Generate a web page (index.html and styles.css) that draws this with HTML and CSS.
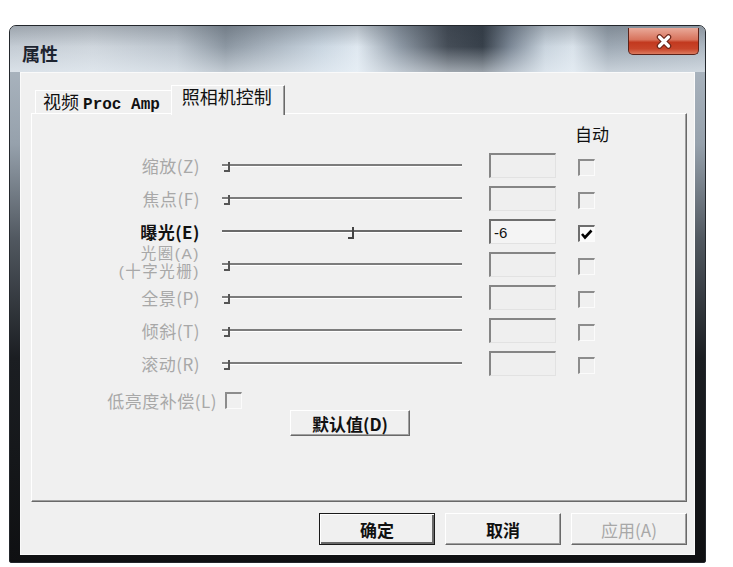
FILE: index.html
```html
<!DOCTYPE html>
<html lang="zh-CN">
<head>
    <meta charset="UTF-8">
    <title>属性</title>
    <link rel="stylesheet" href="styles.css">
</head>
<body>
    <div class="window">
        <div class="titlebar">
            <span class="title">属性</span>
            <div class="close">
                <svg width="18" height="15" viewBox="0 0 18 15">
                    <path d="M4.5 3 L13.5 12 M13.5 3 L4.5 12" stroke="#6b2418" stroke-width="5.5" stroke-linecap="round"/>
                    <path d="M4.5 3 L13.5 12 M13.5 3 L4.5 12" stroke="#ffffff" stroke-width="3.2" stroke-linecap="round"/>
                </svg>
            </div>
        </div>

        <div class="client">
            <div class="tabs">
                <div class="tab">视频 <span class="mono">Proc Amp</span></div>
                <div class="tab active">照相机控制</div>
            </div>

            <div class="panel">
                <div class="grid">
                    <div></div><div></div><div></div>
                    <div class="auto-head">自动</div>

                    <div class="label">缩放(Z)</div>
                    <div class="slider"><span class="track"></span><span class="thumb"></span></div>
                    <div class="field"></div>
                    <div class="check"></div>

                    <div class="label">焦点(F)</div>
                    <div class="slider"><span class="track"></span><span class="thumb"></span></div>
                    <div class="field"></div>
                    <div class="check"></div>

                    <div class="label on">曝光(E)</div>
                    <div class="slider on"><span class="track"></span><span class="thumb" style="left: 126px"></span></div>
                    <div class="field on">-6</div>
                    <div class="check on">
                        <svg width="14" height="14" viewBox="0 0 14 14">
                            <path d="M2 7 L5 10.5 L11.5 3.5" fill="none" stroke="#000" stroke-width="2.6"/>
                        </svg>
                    </div>

                    <div class="label two">
                        <span>光圈(A)</span>
                        <span>(十字光栅)</span>
                    </div>
                    <div class="slider"><span class="track"></span><span class="thumb"></span></div>
                    <div class="field"></div>
                    <div class="check"></div>

                    <div class="label">全景(P)</div>
                    <div class="slider"><span class="track"></span><span class="thumb"></span></div>
                    <div class="field"></div>
                    <div class="check"></div>

                    <div class="label">倾斜(T)</div>
                    <div class="slider"><span class="track"></span><span class="thumb"></span></div>
                    <div class="field"></div>
                    <div class="check"></div>

                    <div class="label">滚动(R)</div>
                    <div class="slider"><span class="track"></span><span class="thumb"></span></div>
                    <div class="field"></div>
                    <div class="check"></div>
                </div>

                <div class="lowlight">
                    <span class="label">低亮度补偿(L)</span>
                    <div class="check"></div>
                </div>

                <div class="default-row">
                    <button class="btn">默认值(D)</button>
                </div>
            </div>

            <div class="actions">
                <button class="btn primary">确定</button>
                <button class="btn">取消</button>
                <button class="btn off">应用(A)</button>
            </div>
        </div>
    </div>
</body>
</html>
```

FILE: styles.css
```css
* {
    box-sizing: border-box;
}
body {
    margin: 0;
    background: #fff;
    font-family: "Noto Sans CJK SC", "Liberation Sans", sans-serif;
}
.window {
    width: 697px;
    height: 538px;
    margin: 25px 0 0 9px;
    display: flex;
    flex-direction: column;
    padding: 0 10px 7px 10px;
    border: 1px solid #23272c;
    border-radius: 7px 7px 2px 2px;
    background: linear-gradient(to bottom, #b3bdc7 0%, #96a1ac 22%, #50575f 40%, #1b1e22 62%, #0f1012 100%);
}
.titlebar {
    height: 46px;
    margin: 0 -10px;
    padding: 0 6px 0 12px;
    display: flex;
    justify-content: space-between;
    align-items: flex-start;
    border-radius: 6px 6px 0 0;
    background:
        linear-gradient(to bottom, rgba(40,48,58,0.25) 0%, rgba(255,255,255,0) 45%, rgba(235,242,248,0.55) 100%),
        linear-gradient(to right, #c4ccd4 0%, #cfd6dd 12%, #bcc5ce 24%, #8c97a2 31%, #a8b3be 37%, #cad6e1 45%, #dfe8f0 50%, #8f9aa6 56%, #454d57 63%, #37404a 68%, #7c8896 72%, #c8d3dd 77%, #d9e2ea 81%, #9ea9b4 86%, #aeb8c2 100%);
}
.title {
    margin-top: 14px;
    font-size: 18px;
    font-weight: 700;
    color: #1d2430;
}
.close {
    width: 71px;
    height: 27px;
    margin-top: 2px;
    display: flex;
    align-items: center;
    justify-content: center;
    border: 1px solid #5b2219;
    border-top: none;
    border-radius: 0 0 5px 5px;
    background: linear-gradient(to bottom, #e9a999 0%, #d8735c 45%, #c2391f 55%, #c8452a 80%, #dc7a5e 100%);
}
.client {
    flex: 1;
    display: flex;
    flex-direction: column;
    padding: 12px 7px 0 10px;
    background: #f0f0f0;
    border: 1px solid #fafafa;
}
.tabs {
    height: 28px;
    padding-left: 4px;
    display: flex;
    align-items: flex-end;
}
.tab {
    height: 23px;
    padding: 0 11px 0 7px;
    font-size: 18px;
    line-height: 20px;
    color: #111;
    white-space: nowrap;
    border-top: 1px solid #fff;
    border-left: 1px solid #fff;
}
.tab .mono {
    font-family: "Liberation Mono", monospace;
    font-size: 16px;
    font-weight: 700;
}
.tab.active {
    height: 30px;
    margin-bottom: -2px;
    position: relative;
    z-index: 1;
    padding: 0 12px 0 10px;
    line-height: 21px;
    background: #f0f0f0;
    border-right: 1px solid #696969;
    box-shadow: inset -1px 0 0 #a0a0a0;
}
.panel {
    height: 389px;
    padding: 10px 0 0 1px;
    border-top: 1px solid #fff;
    border-left: 1px solid #fff;
    border-right: 1px solid #696969;
    border-bottom: 1px solid #696969;
    box-shadow: inset -1px -1px 0 #a0a0a0;
}
.grid {
    display: grid;
    grid-template-columns: 167px 240px 72px 17px;
    grid-template-rows: 21px repeat(7, 25px);
    column-gap: 22px;
    row-gap: 8px;
    align-items: center;
}
.auto-head {
    margin-left: -3px;
    align-self: start;
    white-space: nowrap;
    font-size: 17px;
    line-height: 20px;
    color: #111;
}
.label {
    text-align: right;
    font-size: 17px;
    line-height: 25px;
    letter-spacing: 0.5px;
    color: #a8a8a8;
    white-space: nowrap;
}
.label.on {
    color: #111;
    font-weight: 700;
}
.label.two {
    display: flex;
    flex-direction: column;
    align-items: flex-end;
    margin-top: -3px;
    font-family: "Liberation Sans", "Noto Sans CJK SC", sans-serif;
    font-size: 15.5px;
    line-height: 18px;
    letter-spacing: 1.5px;
}
.slider {
    position: relative;
    height: 25px;
    display: flex;
    align-items: center;
}
.track {
    width: 100%;
    height: 3px;
    border-top: 2px solid #7c7c7c;
    border-bottom: 1px solid #fff;
}
.slider.on .track {
    border-top-color: #6a6a6a;
}
.thumb {
    position: absolute;
    left: 2px;
    top: 9px;
    width: 6px;
    height: 10px;
    border-right: 2px solid #555;
    border-bottom: 2px solid #555;
}
.slider.on .thumb {
    top: 8px;
    height: 12px;
    border-color: #444;
}
.field {
    width: 67px;
    height: 25px;
    margin-left: 5px;
    padding-left: 3px;
    font-family: "Liberation Sans", sans-serif;
    font-size: 15px;
    line-height: 23px;
    color: #111;
    background: #efefef;
    border-top: 2px solid #858585;
    border-left: 2px solid #858585;
    border-right: 1px solid #e2e2e2;
    border-bottom: 1px solid #e2e2e2;
}
.field.on {
    background: #f4f4f4;
    border-color: #6e6e6e #e2e2e2 #e2e2e2 #6e6e6e;
}
.check {
    width: 17px;
    height: 17px;
    margin-top: 3px;
    background: #f0f0f0;
    border-top: 2px solid #8c8c8c;
    border-left: 2px solid #8c8c8c;
    border-right: 1px solid #fbfbfb;
    border-bottom: 1px solid #fbfbfb;
}
.check.on {
    background: #fafafa;
    border-top-color: #6e6e6e;
    border-left-color: #6e6e6e;
}
.check svg {
    display: block;
}
.lowlight {
    width: 209px;
    height: 17px;
    margin-top: 16px;
    display: flex;
    justify-content: flex-end;
    align-items: center;
    gap: 8px;
}
.lowlight .check {
    margin-top: 0;
}
.default-row {
    margin: 1px 0 0 257px;
}
.btn {
    width: 120px;
    height: 26px;
    padding: 0;
    font-family: inherit;
    font-size: 17px;
    font-weight: 700;
    color: #111;
    background: #f0f0f0;
    border: 1px solid;
    border-color: #fff #696969 #696969 #fff;
    box-shadow: inset -1px -1px 0 #a0a0a0;
}
.actions {
    margin-top: 11px;
    display: flex;
    justify-content: flex-end;
    gap: 10px;
}
.actions .btn {
    width: 116px;
    height: 32px;
}
.btn.primary {
    border-color: #1a1a1a;
    box-shadow: inset 1px 1px 0 #fff, inset -2px -2px 0 #696969;
}
.btn.off {
    font-weight: 400;
    color: #a8a8a8;
}
```
